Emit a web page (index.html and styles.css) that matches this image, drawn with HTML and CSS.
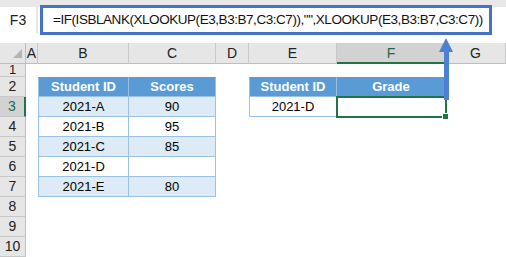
FILE: index.html
```html
<!DOCTYPE html>
<html lang="en">

<head>
  <meta charset="UTF-8">
  <title>XLOOKUP ISBLANK</title>
  <link rel="stylesheet" href="styles.css">
</head>

<body>
  <div class="window">
    <div class="formula-bar">
      <div class="name-box">F3</div>
      <div class="formula">=IF(ISBLANK(XLOOKUP(E3,B3:B7,C3:C7)),"",XLOOKUP(E3,B3:B7,C3:C7))</div>
    </div>

    <div class="sheet">
      <!-- column headers -->
      <div class="corner">
        <svg width="26" height="21" viewBox="0 0 26 21"><polygon points="22,6 22,15 13,15" fill="#b4b4b4"/></svg>
      </div>
      <div class="col-head">A</div>
      <div class="col-head">B</div>
      <div class="col-head">C</div>
      <div class="col-head">D</div>
      <div class="col-head">E</div>
      <div class="col-head active">F</div>
      <div class="col-head">G</div>

      <!-- row 1 -->
      <div class="row-head short">1</div>
      <div></div><div></div><div></div><div></div><div></div><div></div><div></div>

      <!-- row 2 -->
      <div class="row-head">2</div>
      <div></div>
      <div class="t-cell t-head first">Student ID</div>
      <div class="t-cell t-head">Scores</div>
      <div></div>
      <div class="t-cell t-head first">Student ID</div>
      <div class="t-cell t-head">Grade</div>
      <div></div>

      <!-- row 3 -->
      <div class="row-head active">3</div>
      <div></div>
      <div class="t-cell band first">2021-A</div>
      <div class="t-cell band">90</div>
      <div></div>
      <div class="t-cell first">2021-D</div>
      <div class="t-cell selected"><span class="handle"></span></div>
      <div></div>

      <!-- row 4 -->
      <div class="row-head">4</div>
      <div></div>
      <div class="t-cell first">2021-B</div>
      <div class="t-cell">95</div>
      <div></div><div></div><div></div><div></div>

      <!-- row 5 -->
      <div class="row-head">5</div>
      <div></div>
      <div class="t-cell band first">2021-C</div>
      <div class="t-cell band">85</div>
      <div></div><div></div><div></div><div></div>

      <!-- row 6 -->
      <div class="row-head">6</div>
      <div></div>
      <div class="t-cell first">2021-D</div>
      <div class="t-cell"></div>
      <div></div><div></div><div></div><div></div>

      <!-- row 7 -->
      <div class="row-head">7</div>
      <div></div>
      <div class="t-cell band first">2021-E</div>
      <div class="t-cell band">80</div>
      <div></div><div></div><div></div><div></div>

      <div class="row-head">8</div>
      <div></div><div></div><div></div><div></div><div></div><div></div><div></div>
      <div class="row-head">9</div>
      <div></div><div></div><div></div><div></div><div></div><div></div><div></div>
      <div class="row-head">10</div>
      <div></div><div></div><div></div><div></div><div></div><div></div><div></div>
    </div>

    <!-- arrow from F3 up to the formula -->
    <svg class="arrow" width="14" height="62" viewBox="0 0 14 62">
      <polygon points="7,0 14,14 10,14 10,62 5,62 5,14 0,14" fill="#4d7fd2"/>
    </svg>
  </div>
</body>

</html>
```

FILE: styles.css
```css
html, body {
  margin: 0;
  padding: 0;
  background-color: #fff;
}

.window {
  position: relative;
  width: 506px;
  height: 257px;
  overflow: hidden;
  font-family: "Liberation Sans", Arial, sans-serif;
  color: #000;
}

/* formula bar */
.formula-bar {
  display: flex;
  align-items: flex-start;
  height: 43px;
  background: linear-gradient(#e8e8e8 0, #e8e8e8 7px, #fff 7px);
}

.name-box {
  box-sizing: border-box;
  width: 38px;
  height: 26px;
  margin-top: 7px;
  border-right: 2px solid #e8e8e8;
  background: #fff;
  font-size: 14px;
  line-height: 26px;
  text-align: center;
  color: #222;
}

.formula {
  box-sizing: border-box;
  width: 452px;
  height: 30px;
  margin-top: 5px;
  margin-left: 2px;
  padding-left: 10px;
  border: 3px solid #4472c4;
  background: #fff;
  font-size: 13.5px;
  letter-spacing: -0.45px;
  line-height: 24px;
  white-space: nowrap;
  color: #111;
}

/* grid */
.sheet {
  display: grid;
  grid-template-columns: 26px 12px 91px 87px 33px 88px 109px 1fr;
  grid-template-rows: 21px 13px repeat(9, 20px);
}

.sheet > div {
  box-sizing: border-box;
}

.corner {
  background: #e6e6e6;
  border-right: 1px solid #bdbdbd;
  border-bottom: 1px solid #bdbdbd;
}

.corner svg {
  display: block;
}

.col-head {
  background: #e6e6e6;
  border-right: 1px solid #c8c8c8;
  border-bottom: 1px solid #bdbdbd;
  font-size: 14px;
  line-height: 20px;
  text-align: center;
  color: #222;
}

.col-head.active {
  background: #d2d2d2;
  border-bottom: 2px solid #217346;
  color: #1e6b41;
}

.row-head {
  background: #e6e6e6;
  border-right: 1px solid #bdbdbd;
  border-bottom: 1px solid #c8c8c8;
  font-size: 14px;
  line-height: 19px;
  text-align: center;
  color: #222;
}

.row-head.short {
  font-size: 13px;
  line-height: 12px;
}

.row-head.active {
  background: #d2d2d2;
  border-right: 2px solid #217346;
  color: #1e6b41;
}

/* table */
.t-cell {
  position: relative;
  border-right: 1px solid #9bc2e6;
  border-bottom: 1px solid #9bc2e6;
  font-size: 13px;
  line-height: 19px;
  text-align: center;
}

.t-cell.first {
  border-left: 1px solid #9bc2e6;
}

.t-head {
  background: #5b9bd5;
  color: #fff;
  font-weight: bold;
  border-top: 1px solid #5b9bd5;
  line-height: 18px;
}

.t-cell.band {
  background: #ddebf7;
}

.t-cell.selected {
  outline: 2px solid #217346;
  outline-offset: -1px;
}

.handle {
  position: absolute;
  right: -4px;
  bottom: -4px;
  width: 5px;
  height: 5px;
  background: #217346;
  border: 1px solid #fff;
}

.arrow {
  position: absolute;
  left: 439px;
  top: 38px;
}
```
